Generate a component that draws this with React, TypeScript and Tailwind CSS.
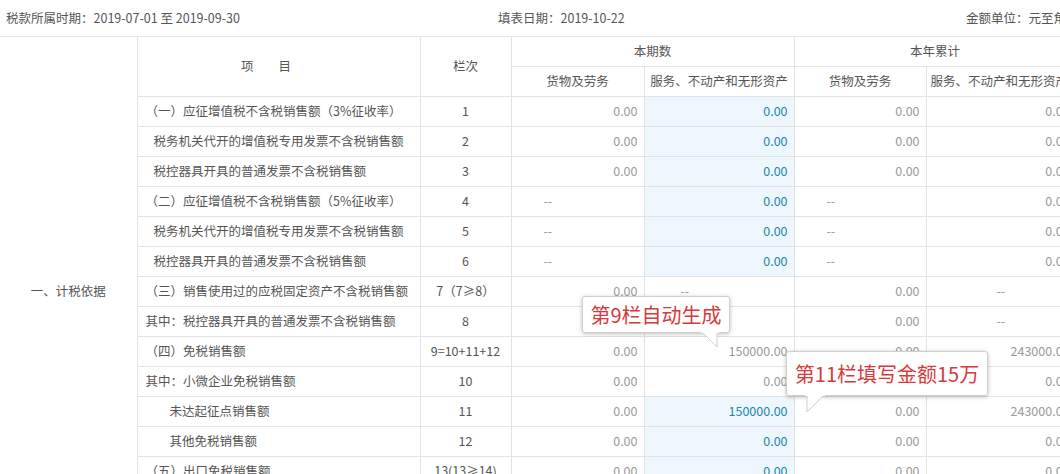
const rows: [string, string, string, string, string, string, boolean, number][] = [
  ['（一）应征增值税不含税销售额（3%征收率）', '1', '0.00', '0.00', '0.00', '0.00', true, 0],
  ['税务机关代开的增值税专用发票不含税销售额', '2', '0.00', '0.00', '0.00', '0.00', true, 1],
  ['税控器具开具的普通发票不含税销售额', '3', '0.00', '0.00', '0.00', '0.00', true, 1],
  ['（二）应征增值税不含税销售额（5%征收率）', '4', '--', '0.00', '--', '0.00', true, 0],
  ['税务机关代开的增值税专用发票不含税销售额', '5', '--', '0.00', '--', '0.00', true, 1],
  ['税控器具开具的普通发票不含税销售额', '6', '--', '0.00', '--', '0.00', true, 1],
  ['（三）销售使用过的应税固定资产不含税销售额', '7（7≥8）', '0.00', '--', '0.00', '--', false, 0],
  ['其中：税控器具开具的普通发票不含税销售额', '8', '0.00', '--', '0.00', '--', false, 0],
  ['（四）免税销售额', '9=10+11+12', '0.00', '150000.00', '0.00', '243000.00', false, 0],
  ['其中：小微企业免税销售额', '10', '0.00', '0.00', '0.00', '0.00', false, 0],
  ['未达起征点销售额', '11', '0.00', '150000.00', '0.00', '243000.00', true, 2],
  ['其他免税销售额', '12', '0.00', '0.00', '0.00', '0.00', true, 2],
  ['（五）出口免税销售额', '13(13≥14)', '0.00', '0.00', '0.00', '0.00', true, 0],
];

const pad = ['pl-2', 'pl-4', 'pl-8'];

export default function App() {
  return (
    <div className="relative w-[1060px] h-[474px] overflow-hidden bg-white text-[12.5px] text-[#555]" style={{ fontFamily: '"Noto Sans CJK SC", "Liberation Sans", sans-serif' }}>
      <div className="flex h-[36px] items-center px-[6px] text-[12.5px] text-[#555]">
        <span className="w-[492px]">税款所属时期：2019-07-01 至 2019-09-30</span>
        <span className="flex-1">填表日期：2019-10-22</span>
        <span className="mr-[-12px] whitespace-nowrap">金额单位：元至角</span>
      </div>
      <table className="border-collapse table-fixed w-[1076px]">
        <colgroup>
          <col className="w-[137px]" />
          <col className="w-[283px]" />
          <col className="w-[91px]" />
          <col className="w-[133px]" />
          <col className="w-[150px]" />
          <col className="w-[132px]" />
          <col className="w-[150px]" />
        </colgroup>
        <thead>
          <tr className="h-[30px]">
            <th className="border-t border-r border-[#e3e3e3] font-normal" rowSpan={2}></th>
            <th className="border border-[#e3e3e3] font-normal tracking-[2em]" rowSpan={2}>项目</th>
            <th className="border border-[#e3e3e3] font-normal" rowSpan={2}>栏次</th>
            <th className="border border-[#e3e3e3] font-normal" colSpan={2}>本期数</th>
            <th className="border border-[#e3e3e3] font-normal" colSpan={2}>本年累计</th>
          </tr>
          <tr className="h-[30px]">
            <th className="border border-[#e3e3e3] font-normal">货物及劳务</th>
            <th className="border border-[#e3e3e3] font-normal">服务、不动产和无形资产</th>
            <th className="border border-[#e3e3e3] font-normal">货物及劳务</th>
            <th className="border border-[#e3e3e3] font-normal text-left pl-1 whitespace-nowrap">服务、不动产和无形资产</th>
          </tr>
        </thead>
        <tbody>
          {rows.map((r, i) => (
            <tr key={i} className="h-[30px]">
              {i === 0 && (
                <td rowSpan={13} className="border-r border-[#e3e3e3] text-center">一、计税依据</td>
              )}
              <td className={`border border-[#e3e3e3] whitespace-nowrap ${pad[r[7]]}`}>{r[0]}</td>
              <td className="border border-[#e3e3e3] text-center">{r[1]}</td>
              <td className={`border border-[#e3e3e3] text-[#999] ${r[2] === '--' ? 'text-left pl-8' : 'text-right pr-[6px]'}`}>{r[2]}</td>
              <td className={`border border-[#e3e3e3] pr-[6px] ${r[6] ? 'bg-[#eef7fd] text-[#1a86a8]' : 'text-[#999]'} ${r[3] === '--' ? 'text-left pl-9' : 'text-right'}`}>{r[3]}</td>
              <td className={`border border-[#e3e3e3] text-[#999] ${r[4] === '--' ? 'text-left pl-8' : 'text-right pr-[6px]'}`}>{r[4]}</td>
              <td className={`border border-[#e3e3e3] text-[#999] ${r[5] === '--' ? 'text-left pl-[70px]' : 'text-right pr-[6px]'}`}>{r[5]}</td>
            </tr>
          ))}
        </tbody>
      </table>

      <div className="absolute left-[582px] top-[296px] w-[148px] h-[37px] bg-white border border-[#cfcfcf] rounded-[3px] shadow-[0_1px_4px_rgba(0,0,0,0.25)] flex items-center justify-center text-[20px] text-[#d7393d]">
        第9栏自动生成
        <svg className="absolute left-[118px] top-[35px]" width="18" height="16" viewBox="0 0 18 16">
          <path d="M1 0 L16 15 L16 0" fill="white" stroke="#cfcfcf" />
          <path d="M0 0 L18 0" stroke="white" strokeWidth="2" />
        </svg>
      </div>
      <div className="absolute left-[786px] top-[351px] w-[202px] h-[45px] bg-white border border-[#cfcfcf] rounded-[3px] shadow-[0_1px_4px_rgba(0,0,0,0.25)] flex items-center justify-center text-[20px] text-[#d7393d]">
        第11栏填写金额15万
        <svg className="absolute left-[18px] top-[43px]" width="20" height="18" viewBox="0 0 20 18">
          <path d="M2 0 L2 17 L19 0" fill="white" stroke="#cfcfcf" />
          <path d="M0 0 L20 0" stroke="white" strokeWidth="2" />
        </svg>
      </div>
    </div>
  );
}
